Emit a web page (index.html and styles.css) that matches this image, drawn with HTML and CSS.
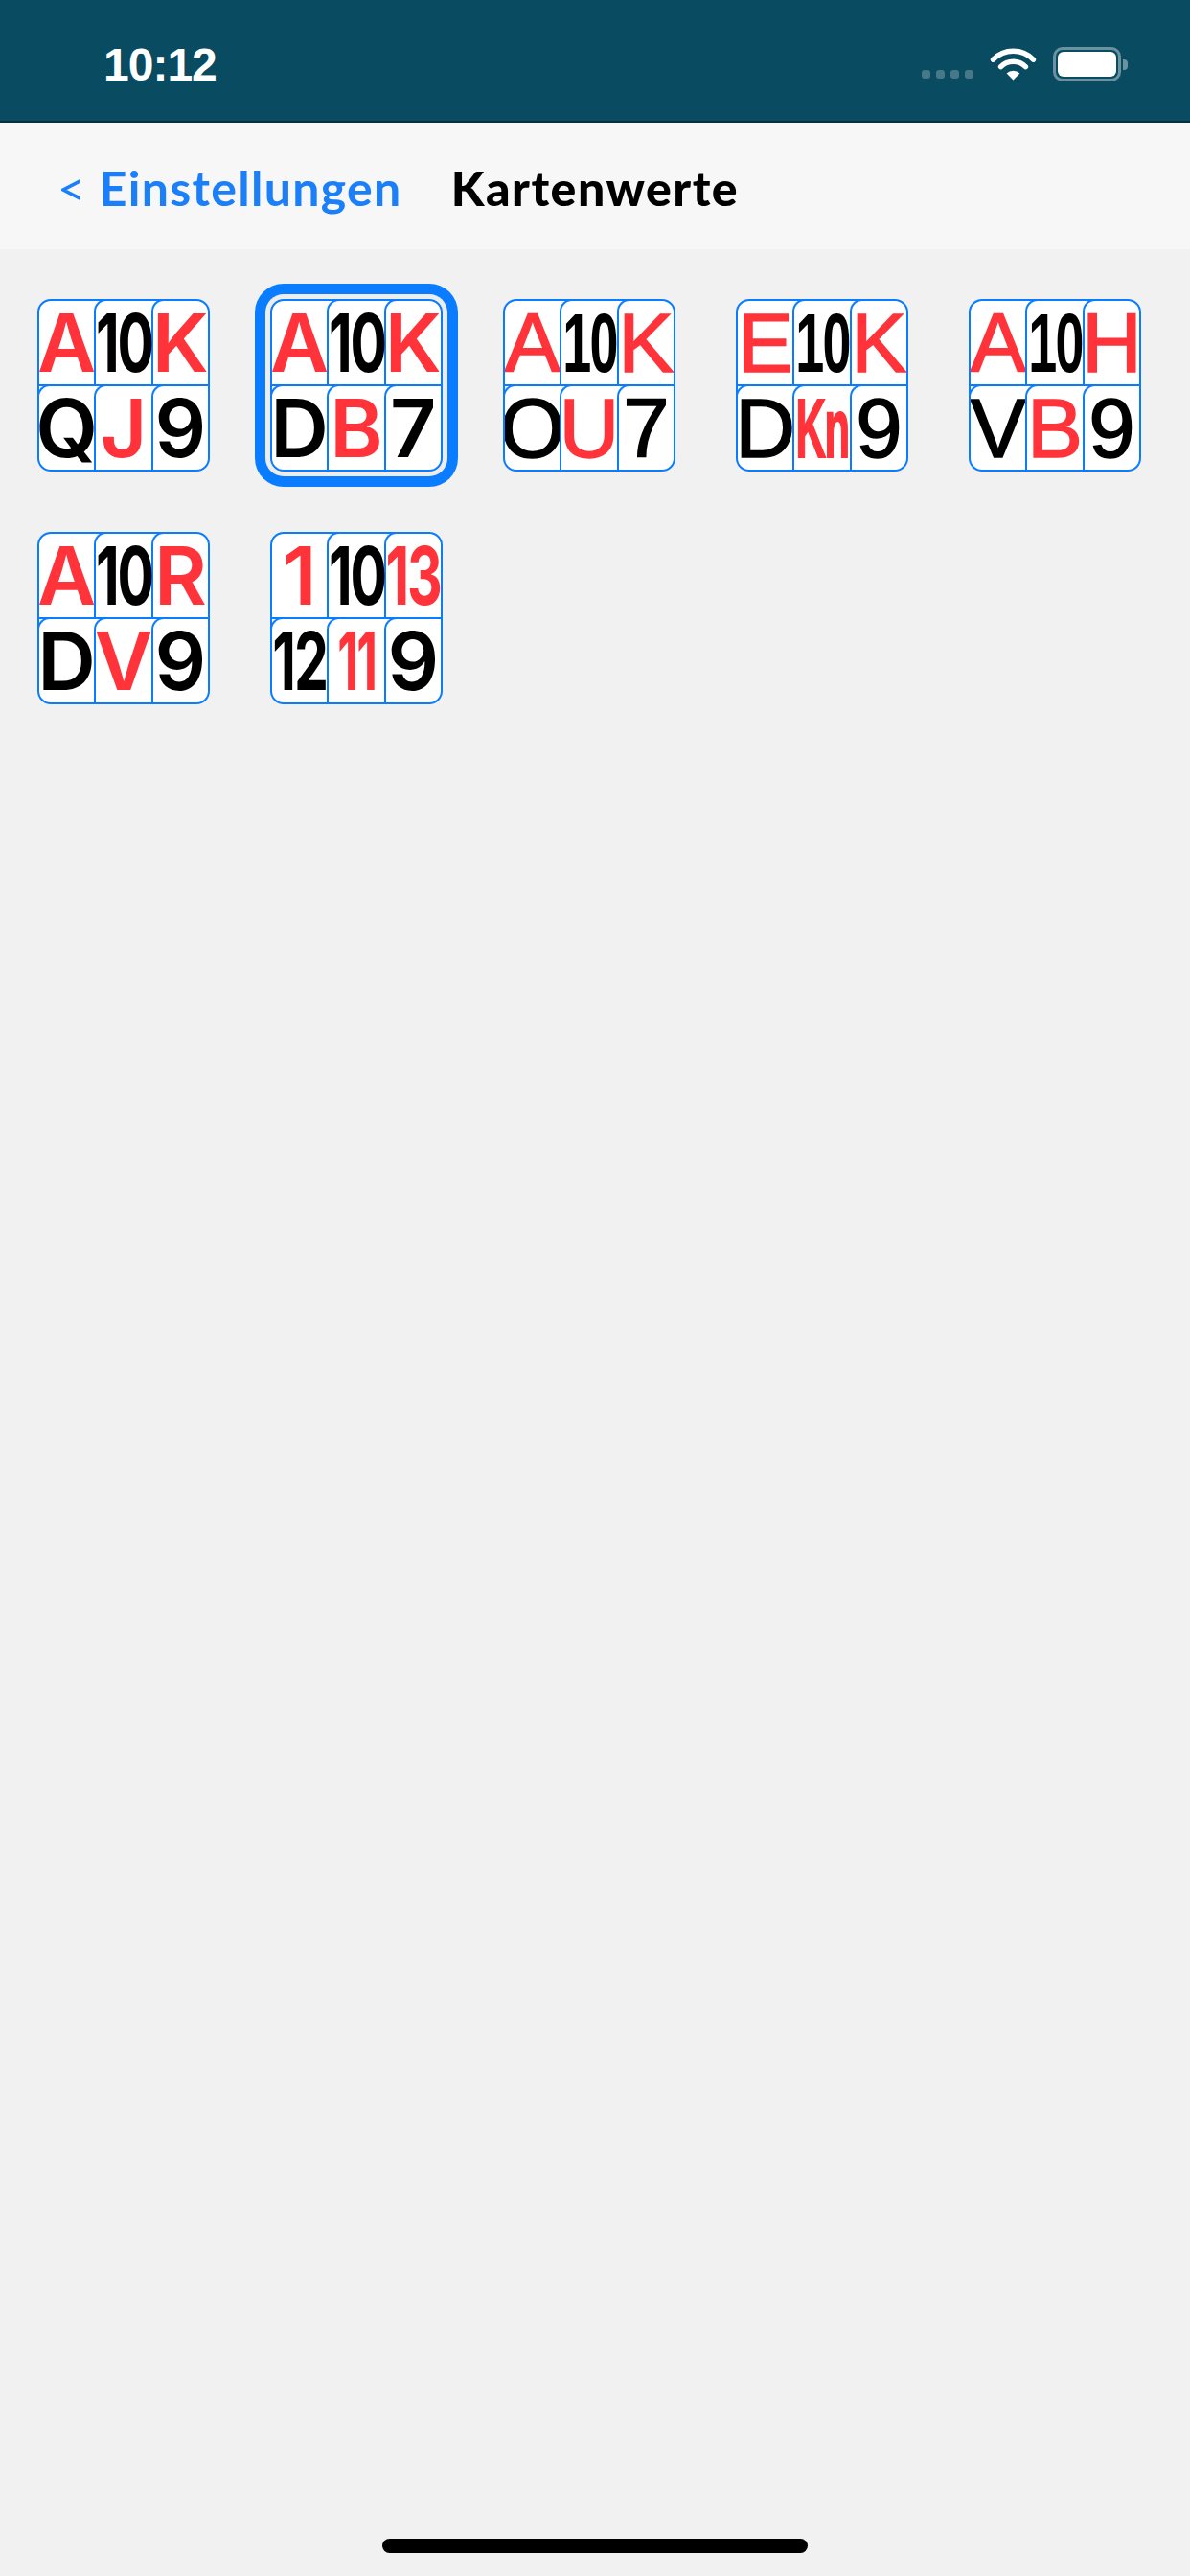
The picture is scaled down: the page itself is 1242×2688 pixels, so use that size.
FILE: index.html
```
<!DOCTYPE html>
<html lang="de">
<head>
    <meta charset="UTF-8">
    <meta name="viewport" content="width=device-width, initial-scale=1.0">
    <title>Kartenwerte</title>
    <link rel="stylesheet" href="styles.css">
</head>
<body>
    <div class="page">
        <div class="status">
            <span class="time">10:12</span>
            <div class="status-icons">
                <div class="signal"><i></i><i></i><i></i><i></i></div>
                <svg class="wifi" width="49" height="34" viewBox="0 0 49 34">
                    <path d="M3.6 12.2 A29 29 0 0 1 45.4 12.2" fill="none" stroke="#fff" stroke-width="5.5" stroke-linecap="round"/>
                    <path d="M11.6 19.6 A18.5 18.5 0 0 1 37.4 19.6" fill="none" stroke="#fff" stroke-width="5.5" stroke-linecap="round"/>
                    <path d="M24.5 33.5 L17.6 26.6 A9.8 9.8 0 0 1 31.4 26.6 Z" fill="#fff"/>
                </svg>
                <div class="battery"><div class="level"></div></div>
                <div class="battery-cap"></div>
            </div>
        </div>

        <div class="navbar">
            <a class="back"><span class="chev">&lt;</span> Einstellungen</a>
            <h1 class="title">Kartenwerte</h1>
            <span></span>
        </div>

        <div class="cards">
            <!-- english -->
            <div class="card sf">
                <div class="row">
                    <span class="cell red">A</span><span class="cell"><b class="sq">10</b></span><span class="cell red">K</span>
                </div>
                <div class="row">
                    <span class="cell">Q</span><span class="cell red">J</span><span class="cell">9</span>
                </div>
            </div>
            <!-- deutsch (selected) -->
            <div class="card sf selected">
                <div class="row">
                    <span class="cell red">A</span><span class="cell"><b class="sq">10</b></span><span class="cell red">K</span>
                </div>
                <div class="row">
                    <span class="cell">D</span><span class="cell red">B</span><span class="cell">7</span>
                </div>
            </div>
            <div class="card narrow">
                <div class="row">
                    <span class="cell red">A</span><span class="cell"><b class="sq">10</b></span><span class="cell red">K</span>
                </div>
                <div class="row">
                    <span class="cell">O</span><span class="cell red">U</span><span class="cell">7</span>
                </div>
            </div>
            <div class="card narrow">
                <div class="row">
                    <span class="cell red">E</span><span class="cell"><b class="sq">10</b></span><span class="cell red">K</span>
                </div>
                <div class="row">
                    <span class="cell">D</span><span class="cell red"><b class="sq sq-kn">Kn</b></span><span class="cell">9</span>
                </div>
            </div>
            <div class="card narrow">
                <div class="row">
                    <span class="cell red">A</span><span class="cell"><b class="sq">10</b></span><span class="cell red">H</span>
                </div>
                <div class="row">
                    <span class="cell">V</span><span class="cell red">B</span><span class="cell">9</span>
                </div>
            </div>
            <div class="card sf">
                <div class="row">
                    <span class="cell red">A</span><span class="cell"><b class="sq">10</b></span><span class="cell red">R</span>
                </div>
                <div class="row">
                    <span class="cell">D</span><span class="cell red">V</span><span class="cell">9</span>
                </div>
            </div>
            <!-- numbers -->
            <div class="card sf">
                <div class="row">
                    <span class="cell red">1</span><span class="cell"><b class="sq">10</b></span><span class="cell red"><b class="sq">13</b></span>
                </div>
                <div class="row">
                    <span class="cell"><b class="sq">12</b></span><span class="cell red"><b class="sq sq-11">11</b></span><span class="cell">9</span>
                </div>
            </div>
        </div>

        <div class="home"></div>
    </div>
</body>
</html>
```

FILE: styles.css
```
body {
    margin: 0;
    background: #f1f1f1;
    font-family: Lato, "Open Sans", sans-serif;
}

.page {
    min-height: 2688px;
    display: flex;
    flex-direction: column;
}

/* status bar */
.status {
    height: 126px;
    background: #094b60;
    border-bottom: 2px solid #06303e;
    display: flex;
    align-items: center;
    justify-content: space-between;
    padding: 0 65px 0 108px;
}

.time {
    color: #fff;
    font-family: "Liberation Sans", Arial, sans-serif;
    font-weight: bold;
    font-size: 48px;
    letter-spacing: -1px;
    margin-top: 8px;
}

.status-icons {
    display: flex;
    align-items: center;
    margin-top: 8px;
}

.signal {
    display: flex;
    gap: 6px;
    margin: 20px 17px 0 0;
}

.signal i {
    width: 9px;
    height: 9px;
    border-radius: 3px;
    background: rgba(255, 255, 255, 0.25);
}

.wifi {
    margin-right: 17px;
}

.battery {
    width: 61px;
    height: 26px;
    border: 3px solid rgba(255, 255, 255, 0.4);
    border-radius: 10px;
    padding: 2px;
}

.battery .level {
    width: 61px;
    height: 26px;
    background: #fff;
    border-radius: 6px;
}

.battery-cap {
    width: 5px;
    height: 11px;
    margin-left: 2px;
    background: rgba(255, 255, 255, 0.4);
    border-radius: 0 4px 4px 0;
}

/* navigation */
.navbar {
    height: 132px;
    background: #f7f7f7;
    display: grid;
    grid-template-columns: 1fr auto 1fr;
    align-items: center;
}

.back {
    margin-left: 60px;
    color: #1a7ff8;
    font-size: 50px;
    font-weight: bold;
    letter-spacing: 1.3px;
    margin-top: 4px;
}

.chev {
    font-weight: normal;
}

.title {
    margin: 4px 0 0;
    font-size: 50px;
    font-weight: 900;
    letter-spacing: 1.5px;
    color: #000;
}

/* card picker */
.cards {
    display: grid;
    grid-template-columns: repeat(5, 180px);
    gap: 63px;
    padding: 52px 39px;
}

.card {
    width: 180px;
    height: 180px;
    box-sizing: border-box;
    border: 2px solid #0a7cff;
    border-radius: 14px;
    background: #fff;
    overflow: hidden;
    display: flex;
    flex-direction: column;
}

.card.selected {
    box-shadow: 0 0 0 5px #ededed, 0 0 0 16px #0a7cff;
}

.row {
    flex: 1;
    display: flex;
    margin-left: -2px;
}

.row + .row {
    border-top: 2px solid #0a7cff;
}

.cell {
    flex: 1;
    min-width: 0;
    margin-top: -2px;
    border-top: 2px solid #0a7cff;
    border-left: 2px solid #0a7cff;
    border-top-left-radius: 13px;
    display: flex;
    align-items: center;
    justify-content: center;
    line-height: 1;
    color: #000;
}

.cell.red {
    color: #ff3339;
}

.card.sf .cell {
    font-family: Inter, Roboto, sans-serif;
    font-weight: 600;
    font-size: 84px;
}

.card.narrow .cell {
    font-family: "Liberation Sans", Arial, sans-serif;
    font-size: 87px;
    -webkit-text-stroke: 1.5px currentColor;
}

.sq {
    display: inline-block;
    font-weight: 700;
    transform: scaleX(0.68);
    letter-spacing: -3px;
}

.card.narrow .sq {
    transform: scaleX(0.62);
    -webkit-text-stroke: 0;
}

.card.narrow .sq-kn {
    transform: scaleX(0.5);
    -webkit-text-stroke: 2px currentColor;
}

.sq-11 {
    transform: scaleX(0.6);
}

.home {
    margin: auto auto 24px;
    width: 444px;
    height: 15px;
    border-radius: 8px;
    background: #000;
}
```
